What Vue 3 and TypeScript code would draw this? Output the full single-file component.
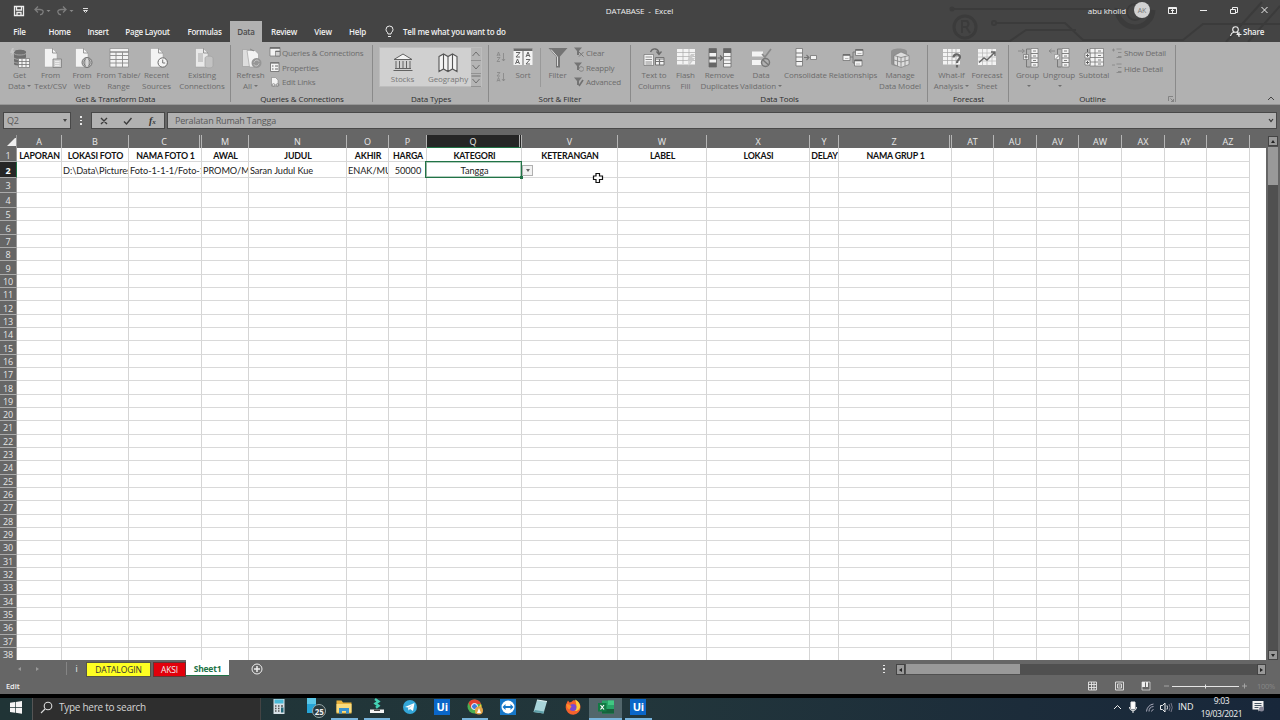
<script setup lang="ts">
import { h } from 'vue'

// Shape tuple: path, fill, stroke, stroke width
type Shape = [string, string, string?, number?]
const W = '#f3f3f3'
const G = '#747474'
const L = '#cfcfcf'
const N = 'none'
const page = 'M3.5 .5h8l4.5 4.5v14h-12.5z'
const fold = 'M11.5 .5v4.5h4.5'

const shapes: Record<string, Shape[]> = {
  get: [
    ['M4 4c0-3 12-3 12 0v12c0 2-12 2-12 0z', '#6e6e6e'],
    ['M4 5.5c2 2 10 2 12 0M4 10c2 2 10 2 12 0M4 14c2 1 4 1.400 6 1', N, '#a5a5a5', 1],
    ['M2 0l-2 5h2l-1 3 4-5h-2l1-3z', '#c4c4c4'],
    ['M8.500 10.500h11v9h-11z', W, G, 0.700],
    ['M8.500 13.500h11M8.500 16.500h11M12 11v8M16 11v8', N, G, 0.800],
  ],
  csv: [[page, W, '#9a9a9a', 0.500], [fold, N, G, 0.700], ['M12 11h8.500v8.500h-8.500z', L, '#858585', 0.900], ['M14 13.500h4.500M14 15.500h4.500M14 17.500h4.500', N, W, 0.800]],
  web: [[page, W, '#9a9a9a', 0.500], [fold, N, G, 0.700], ['M10 14.500a5 5 0 1 0 10 0a5 5 0 1 0-10 0', '#bcbcbc', G, 1], ['M15 9.500c-4 3-4 7 0 10M15 9.500c4 3 4 7 0 10', N, G, 0.900], ['M15 10v9', N, W, 1]],
  table: [['M1 .5h18.500v18.500h-18.500z', W, '#888', 0.700], ['M1 4h18.500', N, G, 1.200], ['M1 7.500h18.500M1 11.500h18.500M1 15h18.500M7 4v15M13.500 4v15', N, '#8a8a8a', 0.900]],
  recent: [[page, W, '#9a9a9a', 0.500], [fold, N, G, 0.700], ['M11 14.500a4.700 4.700 0 1 0 9.400 0a4.700 4.700 0 1 0-9.400 0', W, '#6a6a6a', 1], ['M15.700 11.500v3.500h2.500', N, G, 1]],
  existing: [[page, '#e9e9e9', '#9a9a9a', 0.500], ['M6 5h5v9h-5z', '#c9c9c9'], [fold, N, G, 0.700], ['M13 10c0-2.500 8-2.500 8 0v8c0 2.500-8 2.500-8 0z', '#c3c3c3', '#a2a2a2', 0.700]],
  refresh: [['M1.500 1.500h7l1 1v16h-8z', '#dedede', '#999', 0.600], ['M6 2.500h8l3.500 3.500v13h-9z', W, '#999', 0.600], ['M9 1l4 2', N, G, 0.700], ['M10.500 15a5 5 0 1 0 10 0a5 5 0 1 0-10 0', '#969696'], ['M13 14.500c1-3 4-3 5-1M18 15.500c-1 3-4 3-5 1', N, '#ccc', 1]],
  stocks: [['M1 7.500L10 2l9 5.500zM3 9v7M6.500 9v7M10 9v7M13.500 9v7M17 9v7M2 16.500h16M.5 18.500h19', W, '#626262', 1]],
  geo: [['M1 4.500l4.500-2.500 4.500 2.500 4.500-2.500 4.500 2.500v15l-4.500-2.500-4.500 2.500-4.500-2.500-4.500 2.500zM5.500 2v14.500M10 4.500v15M14.500 2v14.500', W, '#555', 1.100]],
  sort: [['M.5 1h19v16h-19z', W], ['M.5 .5h19v2.500h-19zM9.500 3h1v14h-1z', '#6a6a6a'], ['M3 4.500h4l-4 4.500h4M2.500 16l2-5 2 5M3.300 14.500h2.500M13 9l2-5 2 5M13.800 7.500h2.500M13 11.500h4l-4 4.500h4', N, '#666', 1]],
  filter: [['M.5 0h19l-7.500 8.500v11h-4v-11z', G], ['M3 1.500l6.500 7.500v9', N, '#e5e5e5', 0.900]],
  ttc: [['M0 6.500h9.500v11h-9.500z', W, G, 0.700], ['M1.500 9h6.500M1.500 11.500h6.500M1.500 14h6.500M1.500 16h6.500', N, G, 0.800], ['M11.500 9.500h8.500v7.500h-8.500z', W, G, 1], ['M11.500 11h8.500M11.500 13.500h8.500M15.500 11v6', N, G, 1.200], ['M6.500 4c2-4.500 8-4 8.500 1.500M12.500 3.500l2.500 3 2.500-3', N, '#686868', 1.300]],
  flash: [['M1 1h18v15.500h-18z', W], ['M1 4.500h18M1 8.500h18M1 12.500h18M7 1v15M13 1v15', N, '#aaa', 0.700], ['M15 6l-4 7h3.500l-2.500 6 7-9h-3l3-4z', '#c9c9c9']],
  dup: [['M-1 .5h7.500v18.500h-7.500z', W, G, 0.900], ['M-1 .5h7.500v4.500h-7.500zM-1 8.500h7.500v3h-7.500zM-1 14.500h7.500v4.500h-7.500z', '#666'], ['M13.500 .5h7.500v18.500h-7.500z', W, G, 0.900], ['M13.500 .5h7.500v4.500h-7.500z', '#666'], ['M13.500 8.500h7.500M13.500 12h7.500M13.500 15.500h7.500', N, G, 0.800], ['M7.500 10h4.500M10 7.500l2.500 2.500-2.500 2.500', N, '#666', 1.100]],
  valid: [['M1 3.500h11v5h-11zM1 12h11v5h-11z', W], ['M11 6l3 3 6-8', N, '#888', 1.600], ['M10.500 14.500a4 4 0 1 0 8 0a4 4 0 1 0-8 0M12 12l5.500 5', '#b1b1b1', '#777', 1.500]],
  cons: [['M0 .5h6.500v17.500h-6.500z', W, G, 0.800], ['M0 5h6.500M0 9h6.500M0 13.500h6.500', N, G, 1], ['M8 9.500h4.500M10.500 7l2.500 2.500-2.500 2.500', N, G, 1.100], ['M14.500 7.500h6v4h-6z', W, G, 0.800]],
  rel: [['M6 9h4v-5h3M10 9v6h2', N, G, 0.900], ['M0 6.500h7v6h-7zM12.500 1.500h7.500v6h-7.500zM11.500 12h7.500v6h-7.500z', W, G, 0.800], ['M0 7h7M12.500 2h7.500M11.500 12.500h7.500', N, '#666', 1.500], ['M2 10.500h3.500M14.500 5.500h4M13 16h4', N, '#aaa', 0.800]],
  model: [['M1 3.500c0-4 16-4 16 0v12c0 4-16 3.500-16 0z', '#929292'], ['M4 7.500l7-3.500 8 3.500v9l-8 3-7-3z', '#ddd', '#777', 0.600], ['M4 7.500l7 2 8-2M11 9.500v10M7.500 8.500v9.500M15 8.500v9.500M4 12l7 2 8-2', N, '#8a8a8a', 0.900]],
  whatif: [['M1 1h17v15.500h-17z', W], ['M1 4.500h17M1 8.500h17M1 12.500h17M5.500 1v15.500M10 1v15.500M14 1v15.500', N, '#a5a5a5', 0.700], ['M11.500 9.500c0-4 6.500-4 6.500-.5c0 2.500-3 2.500-3 6M15 17v2.500', N, '#666', 2.200]],
  forecast: [['M1 1h18v16h-18z', W], ['M1 5h18M1 9h18M1 13h18M5.500 1v16M10 1v16M15 1v16', N, '#b5b5b5', 0.700], ['M2 14.500l5-4.500 3 2 7.500-7.500M14 4h4v4', N, '#666', 1.400]],
  group: [['M0 3h6M4 1l2.500 2-2.500 2', N, '#858585', 0.900], ['M12.500 1h-4v18h4', N, G, 0.900], ['M5.500 6.500h5v5h-5z', W, G, 0.700], ['M6.500 9h3M8 7.500v3', N, '#555', 0.900], ['M13 .5h7v18.500h-7z', W, G, 0.700], ['M13 5.500h7M13 10h7M13 14.500h7M15 3h3M15 8h3M15 12.500h3M15 17h3', N, G, 0.900]],
  ungroup: [['M0 3h6M2.500 1l-2.500 2 2.500 2', N, '#858585', 0.900], ['M12.500 1h-4v18h4', N, G, 0.900], ['M5.500 6.500h5v5h-5z', W, G, 0.500], ['M6.500 11l4-4', N, '#777', 0.900], ['M13 .5h7v18.500h-7z', W, G, 0.700], ['M13 5.500h7M13 10h7M13 14.500h7M15 3h3M15 8h3M15 12.500h3M15 17h3', N, G, 0.900]],
  subtotal: [['M6 .5h13.500v17.500h-13.500z', W, G, 0.700], ['M6 5h13.500M6 9.500h13.500M6 14h13.500M11 .5v17.500', N, G, 0.800], ['M14 3h3M14 7.500h3M14 12h3M14 16h3', N, G, 0.900], ['M1 5h5v5h-5zM1 12h5v5h-5z', W, G, 0.700], ['M2 7.500h3M3.500 6v3M2 14.500h3M3.500 13v3M3.500 1v3', N, '#555', 0.900]],
}

// Small icons, 10 × 10 units
const small: Record<string, Shape[]> = {
  qc: [['M0 .5h10v8.500h-10z', W, G, 0.700], ['M0 1h10', N, '#666', 1.600], ['M5.500 4h4.500v5h-4.500z', L, G, 0.700], ['M5.500 4.500h4.500', N, G, 1]],
  props: [['M.5 .5h8.500v9h-8.500z', W, G, 0.900], ['M.5 1h8.500', N, G, 1.300], ['M2 4h1.500M5 4h3M2 7h1.500M5 7h3', N, '#666', 1]],
  links: [['M1.500 .5h4l2.500 2.500v6h-6.500z', W, G, 0.500], ['M2 8a1.500 1.300 0 1 1 3 0a1.500 1.300 0 1 1-3 0M6 8a1.500 1.300 0 1 1 3 0a1.500 1.300 0 1 1-3 0', N, '#888', 0.900]],
  clear: [['M0 .5h8l-3 3.500v4h-2v-4z', G], ['M5 5l4.500 4.500M9.500 5l-4.500 4.500', N, '#777', 1]],
  reapply: [['M0 .5h8l-3 3.500v4h-2v-4z', G], ['M5 7c0-3 4-3 4.500-.5M9.500 7.500c-.5 2.500-3.500 2-4.500.5', N, '#808080', 1]],
  adv: [['M0 .5h8l-3 3.500v4h-2v-4z', G], ['M9 3l-4 6', N, '#707070', 1.600]],
  show: [['M0 2h3M1.500 .5v3M4.500 1h5M6 4.500h3.500M6 8.500h3.500M4.500 9.500h5', N, '#888', 0.900]],
  hide: [['M0 2h3M4.500 1h5M6 4.500h3.500M6 8.500h3.500M4.500 9.500h5', N, '#888', 0.900]],
  az: [['M0 4l1.500-4 1.500 4M.5 3h2M0 5.500h3l-3 4h3M6.500 1v8M5 7l1.500 2 1.500-2', N, '#858585', 0.800]],
  za: [['M0 .5h3l-3 3.500h3M0 9.500l1.500-4 1.500 4M.5 8.500h2M6.500 1v8M5 7l1.500 2 1.500-2', N, '#858585', 0.800]],
}

function draw(list: Shape[], size: number) {
  return h(
    'svg',
    { width: size, height: size, viewBox: `0 0 ${size} ${size}`, overflow: 'visible' },
    list.map(([d, fill, stroke, w]) => h('path', { d, fill, stroke, 'stroke-width': w })),
  )
}
const Big = (p: { n: string }) => draw(shapes[p.n], 20)
Big.props = ['n']
const Small = (p: { n: string }) => draw(small[p.n], 10)
Small.props = ['n']

interface Btn { icon: string; a: string; b?: string; arrow?: boolean; w: number }
const getData: Btn[] = [
  { icon: 'get', a: 'Get', b: 'Data', arrow: true, w: 31 },
  { icon: 'csv', a: 'From', b: 'Text/CSV', w: 31 },
  { icon: 'web', a: 'From', b: 'Web', w: 32 },
  { icon: 'table', a: 'From Table/', b: 'Range', w: 41 },
  { icon: 'recent', a: 'Recent', b: 'Sources', w: 35 },
  { icon: 'existing', a: 'Existing', b: 'Connections', w: 56 },
]
const tools: Btn[] = [
  { icon: 'ttc', a: 'Text to', b: 'Columns', w: 34 },
  { icon: 'flash', a: 'Flash', b: 'Fill', w: 29 },
  { icon: 'dup', a: 'Remove', b: 'Duplicates', w: 39 },
  { icon: 'valid', a: 'Data', b: 'Validation', arrow: true, w: 44 },
  { icon: 'cons', a: 'Consolidate', w: 45 },
  { icon: 'rel', a: 'Relationships', w: 50 },
  { icon: 'model', a: 'Manage', b: 'Data Model', w: 44 },
]
const forecast: Btn[] = [
  { icon: 'whatif', a: 'What-If', b: 'Analysis', arrow: true, w: 39 },
  { icon: 'forecast', a: 'Forecast', b: 'Sheet', w: 32 },
]
const outline: Btn[] = [
  { icon: 'group', a: 'Group', b: ' ', arrow: true, w: 29 },
  { icon: 'ungroup', a: 'Ungroup', b: ' ', arrow: true, w: 34 },
  { icon: 'subtotal', a: 'Subtotal', w: 36 },
]
interface Group { title: string; w: number; pad: number; btns: Btn[]; kind: string; rows?: [string, string][] }
const groups: Group[] = [
  { title: 'Get & Transform Data', w: 231, pad: 4, btns: getData, kind: 'get' },
  { title: 'Queries & Connections', w: 142, pad: 0, btns: [{ icon: 'refresh', a: 'Refresh', b: 'All', arrow: true, w: 39 }], kind: 'query', rows: [['qc', 'Queries & Connections'], ['props', 'Properties'], ['links', 'Edit Links']] },
  { title: 'Data Types', w: 116, pad: 6, btns: [], kind: 'types' },
  { title: 'Sort & Filter', w: 142, pad: 8, btns: [{ icon: 'sort', a: 'Sort', w: 26 }, { icon: 'filter', a: 'Filter', w: 34 }], kind: 'sort', rows: [['clear', 'Clear'], ['reapply', 'Reapply'], ['adv', 'Advanced']] },
  { title: 'Data Tools', w: 297, pad: 6, btns: tools, kind: 'tools' },
  { title: 'Forecast', w: 81, pad: 4, btns: forecast, kind: 'fc' },
  { title: 'Outline', w: 167, pad: 4, btns: outline, kind: 'outline', rows: [['show', 'Show Detail'], ['hide', 'Hide Detail']] },
]

const menu: [string, number][] = [
  ['File', 39], ['Home', 41], ['Insert', 36], ['Page Layout', 63], ['Formulas', 51], ['Data', 32], ['Review', 44], ['View', 34], ['Help', 35],
]

interface Col { id: string; w: number; head: string; val?: string; gap?: boolean; mid?: boolean }
const cols: Col[] = [
  { id: 'A', w: 45, head: 'LAPORAN' },
  { id: 'B', w: 67, head: 'LOKASI FOTO', val: 'D:\\Data\\Pictures' },
  { id: 'C', w: 73, head: 'NAMA FOTO 1', val: 'Foto-1-1-1/Foto-1-1', gap: true },
  { id: 'M', w: 47, head: 'AWAL', val: 'PROMO/MURAH' },
  { id: 'N', w: 98, head: 'JUDUL', val: 'Saran Judul Kue' },
  { id: 'O', w: 42, head: 'AKHIR', val: 'ENAK/MURAH' },
  { id: 'P', w: 38, head: 'HARGA', val: '50000', mid: true },
  { id: 'Q', w: 95, head: 'KATEGORI', val: 'Tangga', mid: true, gap: true },
  { id: 'V', w: 96, head: 'KETERANGAN' },
  { id: 'W', w: 89, head: 'LABEL' },
  { id: 'X', w: 103, head: 'LOKASI' },
  { id: 'Y', w: 29, head: 'DELAY' },
  { id: 'Z', w: 113, head: 'NAMA GRUP 1', gap: true },
  { id: 'AT', w: 42, head: '' },
  { id: 'AU', w: 43, head: '' },
  { id: 'AV', w: 42, head: '' },
  { id: 'AW', w: 43, head: '' },
  { id: 'AX', w: 43, head: '' },
  { id: 'AY', w: 42, head: '' },
  { id: 'AZ', w: 43, head: '' },
]
const rows = Array.from({ length: 38 }, (_, i) => i + 1)
const cell = (r: number, c: Col) => (r === 1 ? c.head : r === 2 ? c.val ?? '' : '')
</script>

<template>
  <div class="window">
    <header class="top">
      <svg class="circuit" width="370" height="42" viewBox="0 0 370 42">
        <g fill="none" stroke="#3b3b3b" stroke-width="2">
          <path d="M40 9h160M85 23h70l18 17h100l20-16h80M0 41h100l16-11h50M155 9h20M316 42l36-40M338 42l32-36" />
          <circle cx="55" cy="27" r="11" stroke-width="3" />
          <path d="M52 33v-12h5q3 3 0 6h-5M56 27l4 6" />
          <path d="M207 8a18 18 0 1 0 36 2" stroke-width="5" />
          <circle cx="225" cy="12" r="8" />
          <circle cx="84" cy="23" r="2" /><circle cx="42" cy="9" r="1.5" />
        </g>
      </svg>
      <div class="titlebar">
        <div class="quick">
          <svg width="100" height="20" viewBox="0 0 100 20">
            <path d="M14.500 6.500h9v9h-9zM16.500 6.500v3.500h5v-3.500M17 15.500v-3h4v3" fill="none" stroke="#eee" stroke-width="1.300" />
            <path d="M35 9.500h5q4 .5 3 3t-3 2M38 6.500l-3 3 3 3M66 9.500h-5q-4 .5-3 3t3 2M63 6.500l3 3-3 3" fill="none" stroke="#7e7e7e" stroke-width="1.300" />
            <path d="M46.500 10h4l-2 2zM69.500 10h4l-2 2z" fill="#8a8a8a" />
            <path d="M83 8.500h5M83.500 10.500h4l-2 2z" fill="none" stroke="#ddd" />
          </svg>
        </div>
        <div class="doc">DATABASE&nbsp; -&nbsp; Excel</div>
        <div class="user">abu kholid<span class="avatar">AK</span></div>
        <svg width="120" height="20" viewBox="0 0 120 20" fill="none" stroke="#eee">
          <path d="M8.500 7.500h8v6h-8zM8.500 8.500h8M12.500 13v-3.500M11 11l1.500-1.500 1.500 1.500" />
          <path d="M40 10.500h7M72.500 9.500v-2h5v5h-2M70.500 9.500h5v4h-5zM101.500 7l6 6M107.500 7l-6 6" />
        </svg>
      </div>
      <nav class="menu">
        <span v-for="[name, w] in menu" :key="name" :class="{ on: name === 'Data' }" :style="{ width: w + 'px' }">{{ name }}</span>
        <svg width="24" height="20" viewBox="0 0 24 20" fill="none" stroke="#eee"><path d="M13 12c0-2-2-2-2-4.500a3.500 3.500 0 0 1 7 0c0 2.500-2 2.500-2 4.500zM13 14.500h3" /></svg>
        <strong>Tell me what you want to do</strong>
        <div class="share">
          <svg width="12" height="11" viewBox="0 0 12 11" fill="none" stroke="#eee" stroke-width="1.100"><circle cx="5.500" cy="3.500" r="2.800" /><path d="M.5 10c.5-2.500 2-3.500 3.500-4M7 6l2 4M6.500 8.500h5M9 6v5" /></svg>
          Share
        </div>
      </nav>
    </header>

    <section class="ribbon">
      <div v-for="g in groups" :key="g.title" class="panel" :style="{ width: g.w + 'px' }">
        <div class="tools" :style="{ paddingLeft: g.pad + 'px' }">
          <div v-if="g.kind === 'types'" class="gallery">
            <div><Big n="stocks" /><span>Stocks</span></div>
            <div class="wide"><Big n="geo" /><span>Geography</span></div>
            <ul>
              <li><svg width="10" height="12" viewBox="0 0 10 12"><path d="M1.500 8l3.500-4 3.500 4" /></svg></li>
              <li><svg width="10" height="12" viewBox="0 0 10 12"><path d="M1.500 4l3.500 4 3.500-4" /></svg></li>
              <li><svg width="10" height="12" viewBox="0 0 10 12"><path d="M.5 2h9M1.500 5l3.500 4 3.500-4" /></svg></li>
            </ul>
          </div>
          <div v-if="g.kind === 'sort'" class="azcol"><Small n="az" /><Small n="za" /></div>
          <div v-for="b in g.btns" :key="b.icon" class="btn" :class="{ divided: b.icon === 'filter' }" :style="{ width: b.w + 'px' }">
            <Big :n="b.icon" />
            <span>{{ b.a }}</span>
            <span v-if="b.b" :class="{ caret: b.arrow }">{{ b.b }}<i v-if="b.arrow"></i></span>
          </div>
          <div v-if="g.rows" class="list">
            <div v-for="[icon, text] in g.rows" :key="text"><Small :n="icon" />{{ text }}</div>
          </div>
        </div>
        <div class="gtitle">{{ g.title }}</div>
        <svg v-if="g.kind === 'outline'" class="launch" width="6" height="6" viewBox="0 0 6 6"><path d="M.5 5v-4.500h4.500M2.500 2.500l3 3M5.500 3v2.500h-2.500" fill="none" stroke="#777" stroke-width=".8" /></svg>
      </div>
      <svg class="collapse" width="8" height="5" viewBox="0 0 8 5"><path d="M1 4l3-3 3 3" fill="none" stroke="#444" /></svg>
    </section>

    <section class="formula">
      <div class="name">Q2<i></i></div>
      <div class="dots"><i></i><i></i><i></i></div>
      <div class="fx">
        <svg width="50" height="14" viewBox="0 0 50 14" fill="none" stroke="#3c3c3c" stroke-width="1.400"><path d="M2 4l6 6M8 4l-6 6M25 7.500l2.500 2.500 5-6" /></svg>
        <em>f<small>x</small></em>
      </div>
      <div class="value">Peralatan Rumah Tangga
        <svg width="6" height="5" viewBox="0 0 6 5"><path d="M1 1l2 2.500 2-2.500" fill="none" stroke="#333" stroke-width="1.200" /></svg>
      </div>
    </section>

    <main class="sheet">
      <div class="grid">
        <div class="heads">
          <div class="corner"></div>
          <div v-for="c in cols" :key="c.id" class="ch" :class="{ gap: c.gap, sel: c.id === 'Q' }" :style="{ width: c.w + 'px' }">{{ c.id }}</div>
        </div>
        <div v-for="r in rows" :key="r" class="row" :class="{ r1: r === 1, r2: r === 2, r34: r === 3 || r === 4 }">
          <div class="rh">{{ r }}</div>
          <div v-for="c in cols" :key="c.id" class="cell" :class="{ mid: c.mid }" :style="{ width: c.w + 'px' }">{{ cell(r, c) }}</div>
        </div>
        <div class="selection"></div>
        <div class="drop"><i></i></div>
        <svg class="cursor" width="12" height="12" viewBox="0 0 12 12"><path d="M4 1.500h3.500v2.500h3v3.500h-3v3h-3.500v-3h-2.500v-3.500h2.500z" fill="#fff" stroke="#111" stroke-width="1.200" /></svg>
      </div>
      <div class="vbar"><b class="up"></b><s></s><b class="down"></b></div>
    </main>

    <section class="tabs">
      <div class="nav"><i class="l"></i><i class="r"></i></div>
      <div class="info">i</div>
      <div class="tab yellow">DATALOGIN</div>
      <div class="tab red">AKSI</div>
      <div class="tab active">Sheet1</div>
      <svg class="add" width="12" height="12" viewBox="0 0 12 12" fill="none" stroke="#eee"><circle cx="6" cy="6" r="5" /><path d="M3 6h6M6 3v6" stroke-width="1.500" /></svg>
      <div class="dots"><i></i><i></i><i></i></div>
      <div class="hbar"><b class="left"></b><s></s><b class="right"></b></div>
    </section>

    <footer class="status">
      <span>Edit</span>
      <svg width="170" height="14" viewBox="0 0 170 14" fill="none" stroke="#e5e5e5">
        <path d="M1.500 3h8v8h-8zM1.500 5.500h8M1.500 8.500h8M4.500 3v8M7 3v8" stroke-width=".9" />
        <path d="M28.500 3h8v8h-8zM30.500 5h4v4h-4zM31.500 7h2" stroke-width=".9" />
        <path d="M55 3h8v8h-8z" stroke-width=".7" /><path d="M55 3h3v5h-3zM59 3h2v5h-2z" fill="#eee" stroke="none" />
        <path d="M77 7h5M155 7h5M157.500 4.500v5" stroke="#aaa" stroke-width=".9" /><path d="M85 7.500h67M118.500 5.500v4" />
      </svg>
      <em>100%</em>
    </footer>

    <div class="taskbar">
      <svg class="win" width="32" height="22" viewBox="0 0 32 22" fill="#f5f5f5"><path d="M10 4.800l5-.8v5h-5zM15.700 3.900l6.300-.9v6h-6.300zM10 9.700h5v5l-5-.8zM15.700 9.700h6.300v6l-6.300-1z" /></svg>
      <div class="search">
        <svg width="13" height="13" viewBox="0 0 13 13" fill="none" stroke="#ddd" stroke-width="1.100"><circle cx="8" cy="5" r="3.800" /><path d="M5 8l-4 4" /></svg>
        Type here to search
      </div>
      <div class="app"><svg width="14" height="18" viewBox="0 0 14 18"><path d="M1.500 1h11v15h-11z" fill="#d7e0e5" /><path d="M2.500 1.500h9v4h-9z" fill="#49b9d6" /><path d="M3 8h1.500M6 8h1.500M9 8h2M3 10.500h1.500M6 10.500h1.500M3 13h1.500M6 13h1.500" stroke="#555" stroke-width="1.500" /><path d="M9 9.500h2.500v5h-2.500z" fill="#267" /></svg></div>
      <div class="app phone"><svg width="14" height="18" viewBox="0 0 14 18"><path d="M2 0h9v15h-9z" fill="#26a4d6" /><path d="M2 0h9v6h-9z" fill="#5cc8e8" /></svg><span class="badge">25</span></div>
      <div class="app run"><svg width="16" height="18" viewBox="0 0 16 18"><path d="M.5 2.500h5l1.500 2h8.500v11h-15z" fill="#e8b13c" /><path d="M.5 6h15v8.500h-15z" fill="#fbdc7d" /><path d="M3 10h10v5.500h-3v-2.500h-4v2.500h-3z" fill="#3b93d0" /></svg></div>
      <div class="app run"><svg width="16" height="18" viewBox="0 0 16 18"><path d="M6 1l3.500 2.500-3 2 3 2.200-2.500 2" fill="none" stroke="#44d1b4" stroke-width="2.400" /><path d="M1 11.500h14v3.500h-14z" fill="#f4f4f4" /><path d="M5 11.500h6v1.500h-6z" fill="#444" /></svg></div>
      <div class="app"><svg width="16" height="18" viewBox="0 0 16 18"><circle cx="8" cy="9" r="7" fill="#33a6d8" /><path d="M3 9l9.500-4-1.500 8-3-2-1.500 1.500-.5-3z" fill="#fff" /><path d="M6 9.500l5-3-4 4z" fill="#b7d6e6" /></svg></div>
      <div class="app"><span class="ui">Ui</span></div>
      <div class="app run"><svg width="16" height="18" viewBox="0 0 16 18"><circle cx="7.500" cy="8.500" r="7" fill="#4caf50" /><path d="M1.500 5a7 7 0 0 1 12.500 1h-6.500l-3 5z" fill="#e34133" /><path d="M14 6a7 7 0 0 1-6 9.500l3-6z" fill="#f9c834" /><circle cx="7.500" cy="8.500" r="3" fill="#3f7de0" stroke="#fff" /><circle cx="12" cy="12.500" r="4" fill="#e3a54a" /><path d="M10 15l2-5 2 5" fill="#fff" /></svg></div>
      <div class="app"><svg width="16" height="18" viewBox="0 0 16 18"><path d="M0 1h16v16h-16z" fill="#1677c8" /><circle cx="8" cy="9" r="6.500" fill="#fff" /><path d="M2.500 9l3-3v2h5v-2l3 3-3 3v-2h-5v2z" fill="#1677c8" /></svg></div>
      <div class="app"><svg width="16" height="18" viewBox="0 0 16 18"><path d="M5 2l10 1.500-3.500 12-10-1.500z" fill="#a9d5da" /><path d="M3 12l9 1.500-.5 2-10-1.500z" fill="#5f9fa8" /><path d="M5 2l10 1.500" stroke="#e5f5f5" /></svg></div>
      <div class="app"><svg width="16" height="18" viewBox="0 0 16 18"><path d="M8 2.500c3-1 7.500 2 7.500 6.500a7.300 7.300 0 0 1-14.800.5c-.2-3 1.300-5 2.300-7l1.500 2c1-.5 2-.2 3.500-2z" fill="#f5622d" /><path d="M10 1.500c4 2 5.500 5 5 8-1 3-4 4-6 3 3-2 3-6 1-11z" fill="#ffce3a" /><circle cx="8" cy="9.500" r="3.500" fill="#7a4ad0" /><path d="M1.500 6c2 0 4 1 5 2.500l-2 3c-2-.5-3-3-3-5.500z" fill="#ff8d2b" /></svg></div>
      <div class="app run hot"><svg width="16" height="18" viewBox="0 0 16 18"><path d="M4 2.500h12v13h-12z" fill="#27a567" /><path d="M10 2.500h6v4.500h-6z" fill="#41c783" /><path d="M4 11h12v4.500h-12z" fill="#16623c" /><path d="M0 5h8.500v8.500h-8.500z" fill="#117a43" /><path d="M2.500 7l3.500 4.500M6 7l-3.500 4.500" stroke="#fff" stroke-width="1.200" /></svg></div>
      <div class="app run"><span class="ui">Ui</span></div>
      <div class="tray">
        <svg width="66" height="18" viewBox="0 0 66 18" fill="none" stroke="#eee">
          <path d="M2 11l3.500-3.500 3.500 3.500" />
          <path d="M19 4h4v7h-4z" fill="#fff" /><path d="M17.500 9c0 5 7 5 7 0M21 13v2" />
          <path d="M34.500 13.500a8 8 0 0 1 7-7.500M37 13.500a5 5 0 0 1 4.500-5M39.500 13.500a2.500 2.500 0 0 1 2-2" stroke="#aab" />
          <path d="M48.500 7.500h2l2.500-2.500v9l-2.500-2.500h-2z" /><path d="M55 7.500q1 2 0 4" /><path d="M57 6q2 3.500 0 7M59 5q2.500 4.500 0 9" stroke="#778" />
        </svg>
        <span class="lang">IND</span>
        <div class="clock"><span>9:03</span><span>19/03/2021</span></div>
        <svg width="12" height="14" viewBox="0 0 12 14"><path d="M.5 2h11v8.500h-3l-2 2v-2h-6z" fill="#f2f2f2" /><path d="M2.500 4.500h7M2.500 6.500h7M2.500 8.500h4" stroke="#345" stroke-width=".9" /><circle cx="9.500" cy="10" r="2.500" fill="#889" /></svg>
      </div>
    </div>
  </div>
</template>

<style>
body { margin: 0; overflow: hidden; background: #444; }
</style>

<style scoped>
.window { width: 1280px; height: 720px; display: flex; flex-direction: column; overflow: hidden; font-family: "Open Sans", "Noto Sans", sans-serif; font-size: 8px; letter-spacing: -0.1px; color: #f0f0f0; background: #666; }
.window * { box-sizing: border-box; }
svg { display: block; flex: none; }
.top { position: relative; height: 42px; background: #444; flex: none; }
.circuit { position: absolute; right: 0; top: 0; }
.titlebar { position: relative; display: flex; height: 21px; align-items: center; font-weight: 500; padding-bottom: 1px; }
.quick { width: 540px; }
.doc { width: 199px; text-align: center; }
.user { margin-left: auto; display: flex; align-items: center; gap: 8px; margin-right: 10px; }
.avatar { width: 16px; height: 16px; border-radius: 50%; background: #d2d2d2; color: #777; display: grid; place-items: center; font-size: 7px; }
.menu { position: relative; display: flex; height: 21px; align-items: center; font-weight: 600; letter-spacing: -0.250px; }
.menu > span { line-height: 21px; text-align: center; height: 21px; }
.menu > .on { background: #b1b1b1; color: #4c4c4c; }
.menu strong { font-weight: 600; margin-left: 4px; }
.share { margin-left: auto; margin-right: 16px; display: flex; gap: 1px; align-items: center; }

.ribbon { position: relative; height: 63px; display: flex; background: #b1b1b1; border-bottom: 1px solid #969696; flex: none; color: #6c6c6c; }
.panel { position: relative; height: 63px; }
.panel::after { content: ""; position: absolute; right: 0; top: 3px; height: 57px; width: 1px; background: #8a8a8a; }
.tools { display: flex; height: 50px; padding-top: 6px; }
.btn { display: flex; flex-direction: column; align-items: center; line-height: 10.500px; white-space: nowrap; }
.btn svg { margin-bottom: 2px; }
.btn span { display: flex; align-items: center; }
.caret { min-height: 10px; }
.caret i { border: 2px solid transparent; border-top: 2px solid #707070; border-bottom: 0; margin-left: 2px; }
.divided { border-left: 1px solid #999; margin-left: 4px; height: 39px; }
.list { display: flex; flex-direction: column; letter-spacing: -0.200px; }
.list div { display: flex; align-items: center; height: 15.500px; gap: 2px; margin-top: -3px; margin-bottom: 3px; white-space: nowrap; }
.azcol { display: flex; flex-direction: column; gap: 10px; width: 13px; padding: 4px 0 0; }
.gallery { display: flex; width: 103px; height: 40px; background: #d0d0d0; border: 1px solid #bdbdbd; margin-top: -1px; }
.gallery div { display: flex; flex-direction: column; align-items: center; width: 45px; padding-top: 4px; gap: 1px; line-height: 11px; color: #777; }
.gallery .wide { width: 46px; }
.gallery ul { margin: 0; padding: 0; list-style: none; width: 10px; background: #b5b5b5; }
.gallery li { height: 13px; border-bottom: 1px solid #929292; }
.gallery path { stroke: #707070; }
.gallery li path { fill: none; }
.gtitle { text-align: center; color: #2c2c2c; line-height: 13px; font-size: 8px; }
.launch { position: absolute; right: 2px; top: 54px; }
.collapse { position: absolute; right: 5px; bottom: 3px; }

.formula { height: 30px; display: flex; align-items: flex-start; padding: 7px 3px 0; background: #666; flex: none; color: #585858; font-size: 9px; letter-spacing: -0.180px; }
.formula > div { height: 17px; }
.name { width: 68px; background: #b1b1b1; border: 1px solid #484848; padding: 0 3px; display: flex; align-items: center; justify-content: space-between; }
.name i { border: 2.500px solid transparent; border-top: 3.500px solid #444; border-bottom: 0; }
.dots { width: 20px; display: flex; flex-direction: column; align-items: center; justify-content: center; gap: 2px; }
.dots i { width: 1.500px; height: 1.500px; background: #e8e8e8; }
.fx { width: 74px; background: #b1b1b1; border: 1px solid #484848; display: flex; align-items: center; padding-left: 7px; }
.fx em { font: italic bold 10px "Liberation Serif", serif; color: #333; }
.fx small { font-size: 7px; }
.value { flex: 1; background: #b1b1b1; border: 1px solid #484848; margin-left: 2px; padding: 0 2px 0 7px; display: flex; align-items: center; justify-content: space-between; }

.sheet { height: 525px; display: flex; background: #666; flex: none; }
.grid { position: relative; width: 1266px; height: 525px; overflow: hidden; background: #fff; }
.heads { display: flex; height: 13px; background: #666; }
.corner { width: 17px; border-right: 1px solid #999; }
.corner::after { content: ""; display: block; margin: 3px 0 0 7px; border-left: 8px solid transparent; border-bottom: 8px solid #eee; }
.ch { text-align: center; line-height: 14px; border-right: 1px solid #b5b5b5; font-size: 9px; color: #e8e8e8; letter-spacing: 0; }
.ch.gap { border-right: 3px double #b5b5b5; }
.ch.sel { background: #262626; border-bottom: 1px solid #217346; }
.row { display: flex; height: 13.340px; font-family: Lato, "Open Sans", sans-serif; font-size: 9.200px; color: #222; letter-spacing: -0.060px; }
.row.r1 { height: 14.200px; font-weight: 700; font-size: 8.800px; letter-spacing: -0.170px; color: #111; }
.row.r2 { height: 15.700px; }
.row.r34 { height: 15.100px; }
.rh { width: 17px; flex: none; background: #666; color: #e5e5e5; border-right: 1px solid #999; border-bottom: 1px solid #aaa; text-align: center; font: 9px "Open Sans", sans-serif; display: flex; align-items: center; justify-content: center; padding-top: 1px; }
.r2 .rh { background: #262626; color: #fff; font-weight: 700; border-right-color: #217346; }
.cell { flex: none; border-right: 1px solid #d5d5d5; border-bottom: 1px solid #d9d9d9; overflow: hidden; white-space: nowrap; padding: 3px 0 0 1px; line-height: 12px; }
.r1 .cell { text-align: center; padding: 2px 0 0 1px; }
.cell.mid { text-align: center; }
.selection { position: absolute; left: 425px; top: 26px; width: 97px; height: 17px; border: 1px solid #217346; box-shadow: inset 0 0 0 1px rgba(33, 115, 70, 0.350); }
.selection::after { content: ""; position: absolute; right: -2px; bottom: -2px; width: 3px; height: 3px; background: #217346; }
.drop { position: absolute; left: 522px; top: 30px; width: 11px; height: 11px; background: #f2f2f2; border: 1px solid #b0b0b0; display: grid; place-items: center; }
.drop i { border: 2.500px solid transparent; border-top: 3px solid #666; border-bottom: 0; }
.cursor { position: absolute; left: 592px; top: 37px; }
.vbar { width: 10px; margin: 1px 0 0 2px; background: #505050; display: flex; flex-direction: column; }
.vbar b, .hbar b { width: 10px; height: 10px; background: #999; border: 1px solid #444; display: grid; place-items: center; flex: none; }
b::after { content: ""; border: 2px solid transparent; }
.up::after { border-bottom: 3px solid #222; border-top: 0; }
.down::after { border-top: 3px solid #222; border-bottom: 0; }
.left::after { border-right: 3px solid #222; border-left: 0; }
.right::after { border-left: 3px solid #222; border-right: 0; }
.vbar s { height: 38px; margin-top: 1px; background: #999; margin-bottom: auto; }

.tabs { height: 18px; display: flex; align-items: flex-start; background: #666; flex: none; font-size: 8.500px; }
.nav { width: 67px; height: 13px; margin-top: 2px; border-right: 1px solid #858585; display: flex; align-items: center; padding-left: 18px; gap: 15px; }
.nav i { border: 2.500px solid transparent; }
.nav .l { border-right: 3px solid #999; border-left: 0; }
.nav .r { border-left: 3px solid #999; border-right: 0; }
.info { width: 19px; text-align: center; line-height: 17px; }
.tab { height: 15px; line-height: 14px; margin-top: 2px; text-align: center; }
.yellow { width: 65px; background: #ff2; color: #333; border: 1px solid #554; }
.red { width: 33px; margin-left: 2px; background: #e2000b; border: 1px solid #633; }
.active { width: 43px; margin: 0; height: 16px; line-height: 17px; background: #fff; color: #217346; font-weight: 700; border-bottom: 1px solid #217346; letter-spacing: -0.200px; }
.add { margin: 3px 0 0 22px; }
.tabs .dots { height: 18px; margin-left: auto; width: 24px; }
.hbar { display: flex; width: 370px; height: 11px; margin: 4px 14px 0 0; background: #505050; }
.hbar b { width: 9px; height: 11px; }
.hbar s { width: 114px; background: #999; margin: 0 auto 0 1px; height: 10px; }

.status { height: 16px; display: flex; align-items: center; padding: 0 5px 1px 6px; background: #666; flex: none; font-size: 7.500px; font-weight: 600; }
.status svg { margin-left: auto; }
.status em { font-style: normal; font-weight: 400; color: #868686; font-size: 7.500px; width: 18px; letter-spacing: -0.300px; }

.taskbar { height: 26px; border-top: 4px solid #000; display: flex; flex: none; background: linear-gradient(90deg, #203436, #22363b 50%, #1c2c3a 80%, #18273a); }
.search { width: 229px; background: #2e2e2e; border-left: 1px solid #555; border-right: 1px solid #444; display: flex; align-items: center; padding: 0 0 4px 7px; gap: 6px; font-size: 10px; letter-spacing: -0.270px; color: #d5d5d5; margin-right: 1.500px; }
.app { position: relative; width: 32.700px; height: 22px; display: flex; justify-content: center; flex: none; }
.run::after { content: ""; position: absolute; left: 3px; right: 3px; bottom: 0; height: 2px; background: #78b4dc; }
.hot { background: #52666b; }
.hot::after { left: 0; right: 0; }
.badge { position: absolute; left: 17px; top: 6px; width: 14px; height: 14px; border-radius: 50%; background: #29383c; border: 1px solid #9aa; font-size: 8px; font-weight: 700; display: grid; place-items: center; }
.ui { width: 16px; height: 16px; margin-top: 1px; background: #0a66c8; color: #fff; font-weight: 700; font-size: 11px; line-height: 15px; text-align: center; }
.tray { margin-left: auto; display: flex; padding-right: 16px; }
.lang { font-size: 9px; line-height: 18px; width: 16px; letter-spacing: -0.200px; }
.clock { width: 54px; display: flex; flex-direction: column; align-items: center; line-height: 12.500px; font-size: 8.500px; letter-spacing: -0.350px; margin-top: -3px; padding-left: 1px; }
.tray > svg:last-child { margin-top: 1px; margin-left: 4px; }
</style>
